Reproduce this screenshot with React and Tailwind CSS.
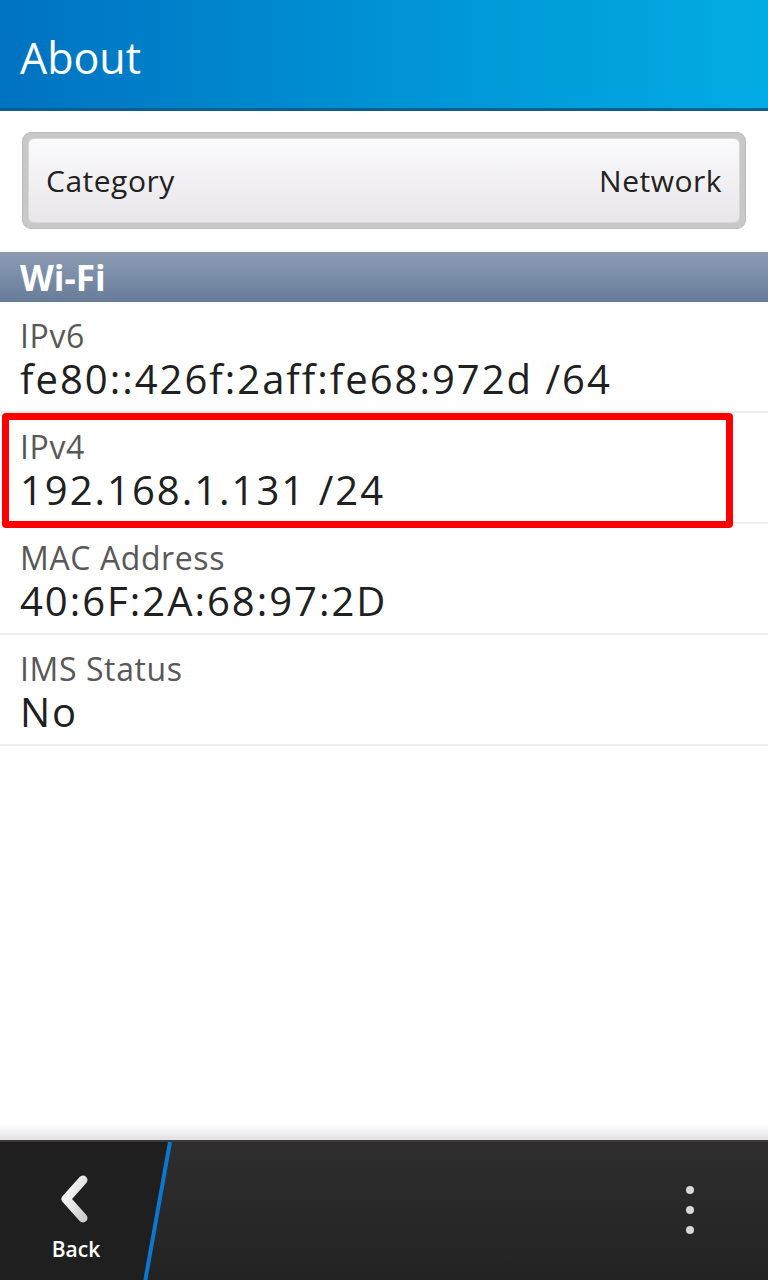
import React from "react";

const font = { fontFamily: '"Open Sans", "Noto Sans", sans-serif' };

function Row({ label, value, highlight }) {
  return (
    <div className="relative h-[111px] border-b-2 border-[#eeeeee] pl-[20px] pt-[14px]">
      <div className="text-[32px] leading-[40px] tracking-[0.6px] text-[#585858]">{label}</div>
      <div className="text-[40px] leading-[46px] tracking-[2px] text-[#202020]">{value}</div>
      {highlight && (
        <div className="absolute left-[2px] top-0 w-[731px] h-[115px] border-[7px] border-[#ff0000] rounded-[4px] z-10" />
      )}
    </div>
  );
}

export default function App() {
  return (
    <div className="w-[768px] h-[1280px] flex flex-col bg-white overflow-hidden" style={font}>
      <div className="h-[111px] shrink-0 bg-gradient-to-r from-[#0072c1] via-[#0092d4] to-[#03ace5] border-b-[3px] border-[#075f95] flex items-center pl-[20px]">
        <div className="text-[43px] text-white leading-none mt-[6px]">About</div>
      </div>
      <div className="shrink-0 px-[22px] pt-[21px] pb-[23px]">
        <div className="h-[97px] rounded-[9px] bg-[#c8c8c8] border border-[#bdbdbd] p-[5px]">
          <div className="h-full rounded-[6px] border border-[#d8d8d8] bg-gradient-to-b from-[#fbfafc] to-[#e8e6ea] flex items-center justify-between pl-[17px] pr-[17px]">
            <span className="text-[30px] tracking-[0.5px] text-[#222222]">Category</span>
            <span className="text-[30px] tracking-[0.5px] text-[#222222]">Network</span>
          </div>
        </div>
      </div>
      <div className="h-[50px] shrink-0 bg-gradient-to-b from-[#8d9cb4] to-[#677c9a] flex items-center pl-[20px]">
        <span className="text-[35px] font-bold text-white leading-none">Wi-Fi</span>
      </div>
      <Row label="IPv6" value="fe80::426f:2aff:fe68:972d /64" />
      <Row label="IPv4" value="192.168.1.131 /24" highlight />
      <Row label="MAC Address" value="40:6F:2A:68:97:2D" />
      <Row label="IMS Status" value="No" />
      <div className="flex-1 bg-white" />
      <div className="h-[16px] shrink-0 bg-gradient-to-b from-white to-[#e2e0e4]" />
      <div className="relative h-[140px] shrink-0 bg-gradient-to-b from-[#2e2e2e] to-[#232323] border-t-2 border-[#3a3a3a]">
        <svg className="absolute left-0 top-0" width="180" height="140" viewBox="0 0 180 140">
          <polygon points="0,0 170,0 145,140 0,140" fill="#1f1f1f" />
          <line x1="170" y1="0" x2="145" y2="140" stroke="#0a78d0" strokeWidth="4" />
        </svg>
        <div className="absolute left-0 top-0 w-[152px] h-full flex flex-col items-center">
          <svg className="mt-[32px]" width="40" height="50" viewBox="0 0 40 50">
            <defs>
              <linearGradient id="chev" x1="0" y1="0" x2="1" y2="1">
                <stop offset="0" stopColor="#ffffff" />
                <stop offset="1" stopColor="#cfcfcf" />
              </linearGradient>
            </defs>
            <polyline points="27,6 10,25 27,44" fill="none" stroke="url(#chev)" strokeWidth="9" strokeLinecap="round" strokeLinejoin="round" />
          </svg>
          <span className="mt-[15px] text-[21px] font-semibold text-white leading-none">Back</span>
        </div>
        <div className="absolute left-[686px] top-[44px] flex flex-col gap-[12px]">
          <div className="w-[8px] h-[8px] rounded-full bg-[#d8d8d8]" />
          <div className="w-[8px] h-[8px] rounded-full bg-[#d8d8d8]" />
          <div className="w-[8px] h-[8px] rounded-full bg-[#d8d8d8]" />
        </div>
      </div>
    </div>
  );
}
